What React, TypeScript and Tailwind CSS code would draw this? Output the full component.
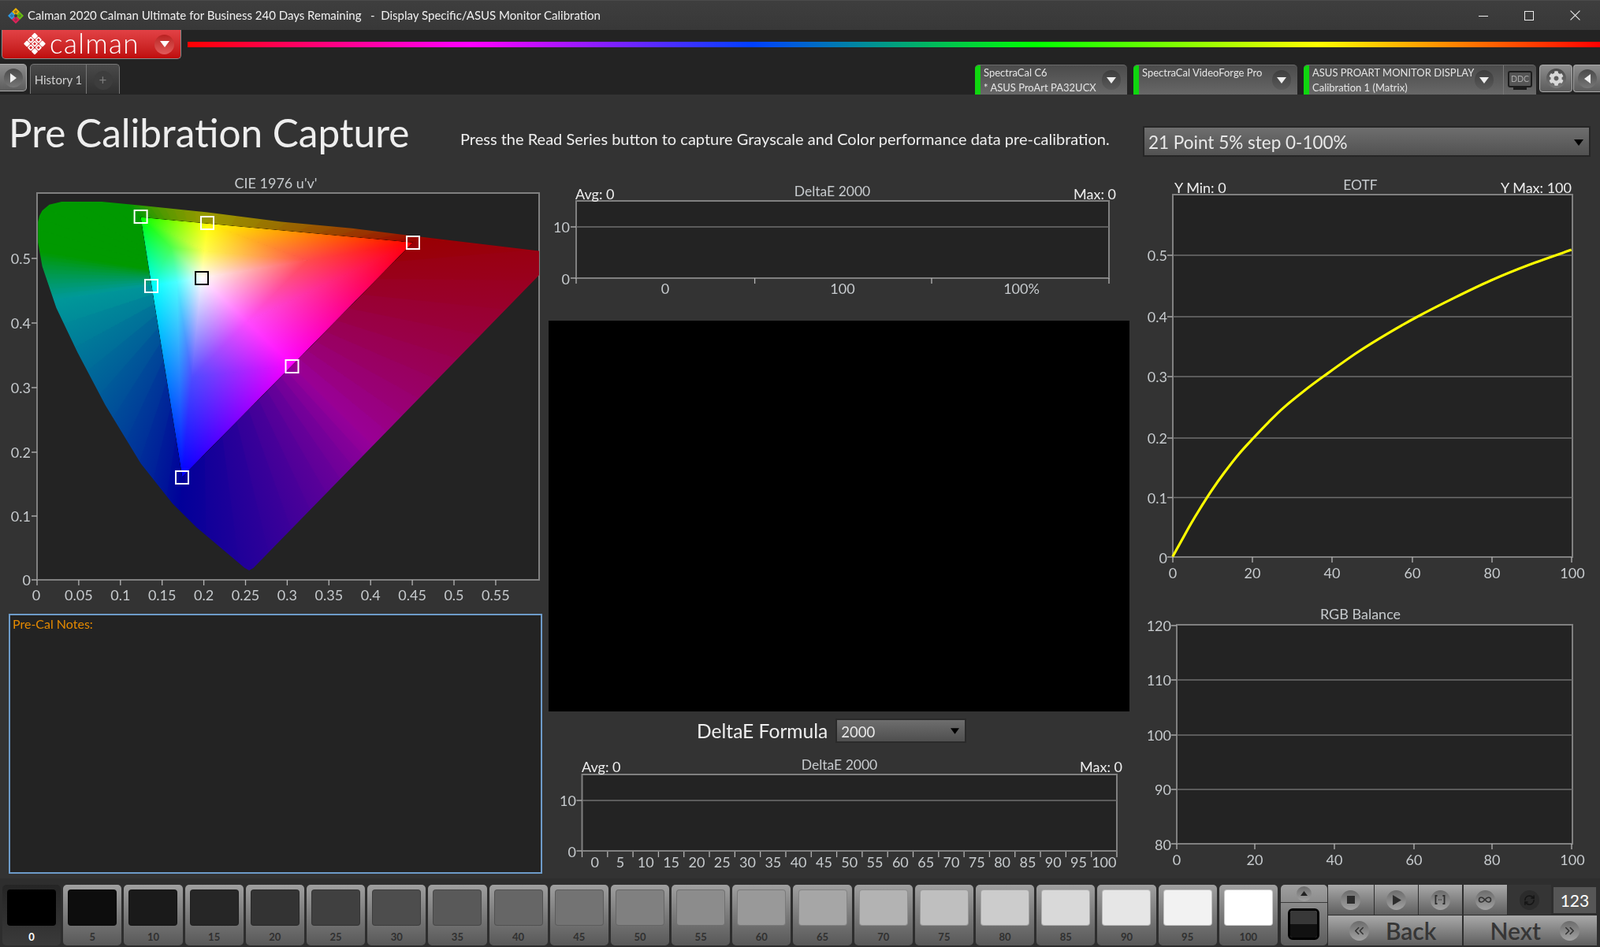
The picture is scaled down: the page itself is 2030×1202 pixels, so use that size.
import React from "react";
import { ChevronsLeft, ChevronsRight, Infinity as InfinityIcon, RefreshCw } from "lucide-react";
import { FaCog } from "react-icons/fa";

type P = [number, number];
type C = [number, number, number];

const z = (x: number, y: number): P => [x / 2.24, 210 + y / 2.657];
const lerpP = (a: P, b: P, t: number): P => [a[0] + (b[0] - a[0]) * t, a[1] + (b[1] - a[1]) * t];
const lerpC = (a: C, b: C, t: number): C => [a[0] + (b[0] - a[0]) * t, a[1] + (b[1] - a[1]) * t, a[2] + (b[2] - a[2]) * t];

let gid = 0;
function Mesh({ a, ca, b, cb, d, cd }: { a: P; ca: C; b: P; cb: C; d: P; cd: C }) {
  const pts = [a, b, d].map((p) => p.join(",")).join(" ");
  const out: React.ReactNode[] = [];
  const channel = ["#ff0000", "#00ff00", "#0000ff"];
  for (let i = 0; i < 3; i++) {
    const fa = ca[i], fb = cb[i], fd = cd[i];
    const key = `m${gid++}`;
    if (Math.abs(fa - fb) < 1e-6 && Math.abs(fb - fd) < 1e-6) {
      const v = Math.round(fa * 255);
      if (v > 0) {
        const col = i === 0 ? `rgb(${v},0,0)` : i === 1 ? `rgb(0,${v},0)` : `rgb(0,0,${v})`;
        out.push(<polygon key={key} points={pts} fill={col} className="mix-blend-plus-lighter" />);
      }
      continue;
    }
    const det = (b[0] - a[0]) * (d[1] - a[1]) - (d[0] - a[0]) * (b[1] - a[1]);
    const ga = ((fb - fa) * (d[1] - a[1]) - (fd - fa) * (b[1] - a[1])) / det;
    const gb = ((fd - fa) * (b[0] - a[0]) - (fb - fa) * (d[0] - a[0])) / det;
    const l = ga * ga + gb * gb;
    const nx = ga / l, ny = gb / l;
    out.push(
      <linearGradient
        key={key + "g"}
        id={key}
        gradientUnits="userSpaceOnUse"
        x1={a[0] - fa * nx}
        y1={a[1] - fa * ny}
        x2={a[0] + (1 - fa) * nx}
        y2={a[1] + (1 - fa) * ny}
      >
        <stop offset="0" stopColor="#000000" />
        <stop offset="1" stopColor={channel[i]} />
      </linearGradient>
    );
    out.push(<polygon key={key} points={pts} fill={`url(#${key})`} className="mix-blend-plus-lighter" />);
  }
  return <>{out}</>;
}

const W = z(573, 380);
const WHITE: C = [1, 1, 1];
const inner: [P, C][] = [
  [z(1173, 260), [1, 0, 0]],
  [z(590, 196), [1, 1, 0]],
  [z(400, 175), [0, 1, 0]],
  [z(431, 405), [0, 1, 1]],
  [z(518, 1050), [0, 0, 1]],
  [z(830, 674), [1, 0, 1]],
];
const k = 0.6;
const outer: [P, C][] = [
  [z(1800, 130), [k, 0, 0]],
  [z(600, 60), [k, k, 0]],
  [z(54, -235), [0, k, 0]],
  [z(-100, 250), [0, k, 0]],
  [z(60, 470), [0, k, k]],
  [z(490, 1400), [0, 0, k]],
  [z(1472, 1423), [k, 0, k]],
];
const locus = [
  [108, 190], [112, 170], [120, 152], [140, 132], [175, 122], [290, 122], [400, 135], [590, 158], [800, 190], [1000, 212], [1190, 240], [1532, 288],
  [1532, 370], [720, 1358], [708, 1366], [695, 1357], [560, 1222], [490, 1140], [400, 1005], [300, 810], [220, 630], [160, 480], [120, 340], [108, 260],
]
  .map(([x, y]) => z(x, y).join(","))
  .join(" ");

function OuterGamut() {
  const parts: React.ReactNode[] = [];
  outer.forEach(([p, c], i) => {
    const [q, e] = outer[(i + 1) % outer.length];
    const n = 10;
    for (let s = 0; s < n; s++) {
      const c0 = lerpC(c, e, s / n), c1 = lerpC(c, e, (s + 1) / n);
      parts.push(<Mesh key={`${i}-${s}`} a={W} ca={lerpC(c0, c1, 0.5)} b={lerpP(p, q, s / n)} cb={c0} d={lerpP(p, q, (s + 1) / n)} cd={c1} />);
    }
  });
  return <g className="isolate">{parts}</g>;
}

function InnerGamut() {
  const wh = 0.3;
  const mid = (p: P): P => lerpP(W, p, 0.5);
  const tint = (c: C): C => lerpC(c, WHITE, wh);
  const parts: React.ReactNode[] = [];
  inner.forEach(([p, c], i) => {
    const [q, e] = inner[(i + 1) % inner.length];
    parts.push(<Mesh key={`a${i}`} a={W} ca={WHITE} b={mid(p)} cb={tint(c)} d={mid(q)} cd={tint(e)} />);
    parts.push(<Mesh key={`b${i}`} a={mid(p)} ca={tint(c)} b={p} cb={c} d={q} cd={e} />);
    parts.push(<Mesh key={`c${i}`} a={mid(p)} ca={tint(c)} b={q} cb={e} d={mid(q)} cd={tint(e)} />);
  });
  return <g className="isolate">{parts}</g>;
}

function T({ x, y, children, anchor = "middle", size = 18, fill = "#c6cacd" }: { x: number; y: number; children: React.ReactNode; anchor?: "start" | "middle" | "end"; size?: number; fill?: string }) {
  return (
    <text x={x} y={y} fontSize={size} textAnchor={anchor} dominantBaseline="central" fill={fill}>
      {children}
    </text>
  );
}

function Plot({ l, t, r, b }: { l: number; t: number; r: number; b: number }) {
  return <rect x={l} y={t} width={r - l} height={b - t} fill="#232323" stroke="#808080" strokeWidth={2} />;
}
const HLine = ({ l, r, y }: { l: number; r: number; y: number }) => <line x1={l} x2={r} y1={y} y2={y} stroke="#6f6f6f" strokeWidth={1.6} />;
const YTick = ({ l, y }: { l: number; y: number }) => <line x1={l - 7} x2={l} y1={y} y2={y} stroke="#a8a8a8" strokeWidth={1.5} />;
const XTick = ({ x, b, len = 7 }: { x: number; b: number; len?: number }) => <line x1={x} x2={x} y1={b} y2={b + len} stroke="#b5b5b5" strokeWidth={1.3} />;

function CieChart() {
  const L = 47, R = 684, Tp = 245, B = 736;
  const us = ["0", "0.05", "0.1", "0.15", "0.2", "0.25", "0.3", "0.35", "0.4", "0.45", "0.5", "0.55"];
  const vs: [string, number][] = [["0.5", 328], ["0.4", 410], ["0.3", 492], ["0.2", 574], ["0.1", 655], ["0", 736]];
  const marks: [number, number, string][] = [
    [178.6, 275, "#fff"], [263, 283, "#fff"], [524, 308, "#fff"], [192, 363, "#fff"], [370.5, 465, "#fff"], [231, 606, "#fff"], [256, 353, "#000"],
  ];
  return (
    <svg viewBox="0 225 696 546" width={696} height={546} className="block">
      <T x={350} y={232}>CIE 1976 u'v'</T>
      <Plot l={L} t={Tp} r={R} b={B} />
      <clipPath id="locus">
        <polygon points={locus} />
      </clipPath>
      <g clipPath="url(#locus)">
        <OuterGamut />
        <InnerGamut />
      </g>
      {marks.map(([x, y, c], i) => (
        <rect key={i} x={x - 8} y={y - 8} width={16} height={16} fill="none" stroke={c} strokeWidth={2} />
      ))}
      {vs.map(([s, y]) => (
        <g key={s}>
          <YTick l={L} y={y} />
          <T x={39} y={y} anchor="end">{s}</T>
        </g>
      ))}
      {us.map((s, i) => (
        <g key={s}>
          <XTick x={L + i * 52.9} b={B} />
          <T x={L + i * 52.9 + (i === 0 ? -1 : 0)} y={755}>{s}</T>
        </g>
      ))}
    </svg>
  );
}

function TopDelta() {
  const L = 731, R = 1407, Tp = 255, B = 353;
  return (
    <svg viewBox="696 225 744 175" width={744} height={175} className="block">
      <Plot l={L} t={Tp} r={R} b={B} />
      <HLine l={L} r={R} y={288} />
      <T x={1056} y={242} size={17.5}>DeltaE 2000</T>
      <T x={730} y={246} anchor="start" fill="#eeeeee">Avg: 0</T>
      <T x={1416} y={246} anchor="end" fill="#eeeeee">Max: 0</T>
      <YTick l={L} y={288} />
      <YTick l={L} y={353} />
      <T x={723} y={288} anchor="end">10</T>
      <T x={723} y={354} anchor="end">0</T>
      {[731, 957.6, 1182, 1407].map((x) => (
        <XTick key={x} x={x} b={B} />
      ))}
      <T x={844} y={366}>0</T>
      <T x={1069} y={366}>100</T>
      <T x={1296} y={366}>100%</T>
    </svg>
  );
}

function BottomDelta() {
  const L = 738.5, R = 1417, Tp = 983, B = 1080;
  const step = (R - L) / 21;
  return (
    <svg viewBox="696 953 744 162" width={744} height={162} className="block">
      <Plot l={L} t={Tp} r={R} b={B} />
      <HLine l={L} r={R} y={1016} />
      <T x={1065} y={970} size={17.5}>DeltaE 2000</T>
      <T x={738} y={973} anchor="start" fill="#eeeeee">Avg: 0</T>
      <T x={1424} y={973} anchor="end" fill="#eeeeee">Max: 0</T>
      <YTick l={L} y={1016} />
      <YTick l={L} y={1080} />
      <T x={731} y={1016} anchor="end">10</T>
      <T x={731} y={1081} anchor="end">0</T>
      {Array.from({ length: 22 }, (_, i) => (
        <XTick key={i} x={L + i * step} b={B + 1} />
      ))}
      {Array.from({ length: 21 }, (_, i) => (
        <T key={i} x={L + (i + 0.5) * step} y={1094}>{i * 5}</T>
      ))}
    </svg>
  );
}

const curve: P[] = [
  [127, 1413], [158, 1352], [188, 1293], [220, 1235], [258, 1170], [300, 1105], [350, 1035], [400, 975], [450, 918], [500, 865], [570, 802], [640, 745],
  [750, 660], [850, 592], [950, 530], [1075, 460], [1200, 395], [1330, 337], [1472, 282],
].map(([x, y]) => [1440 + x / 2.658, 220 + y / 2.904] as P);

function smooth(p: P[]) {
  let d = `M${p[0][0]},${p[0][1]}`;
  for (let i = 0; i < p.length - 1; i++) {
    const a = p[Math.max(0, i - 1)], b = p[i], c = p[i + 1], e = p[Math.min(p.length - 1, i + 2)];
    d += ` C${b[0] + (c[0] - a[0]) / 6},${b[1] + (c[1] - a[1]) / 6} ${c[0] - (e[0] - b[0]) / 6},${c[1] - (e[1] - b[1]) / 6} ${c[0]},${c[1]}`;
  }
  return d;
}

function Eotf() {
  const L = 1488, R = 1995, Tp = 247, B = 707;
  const ys: [string, number][] = [["0.5", 324], ["0.4", 402], ["0.3", 478], ["0.2", 556], ["0.1", 631.5]];
  const xs: [string, number][] = [["0", 1488], ["20", 1589], ["40", 1690], ["60", 1792], ["80", 1893], ["100", 1994]];
  return (
    <svg viewBox="1440 225 590 545" width={590} height={545} className="block">
      <Plot l={L} t={Tp} r={R} b={B} />
      {ys.map(([s, y]) => (
        <g key={s}>
          <HLine l={L} r={R} y={y} />
          <YTick l={L} y={y} />
          <T x={1481} y={y} anchor="end">{s}</T>
        </g>
      ))}
      <YTick l={L} y={B} />
      <T x={1481} y={708} anchor="end">0</T>
      {xs.map(([s, x]) => (
        <g key={s}>
          <XTick x={x} b={B} />
          <T x={x + (s === "100" ? 1 : 0)} y={727}>{s}</T>
        </g>
      ))}
      <T x={1726} y={234} size={17.5}>EOTF</T>
      <T x={1490} y={238} anchor="start" fill="#eeeeee">Y Min: 0</T>
      <T x={1994} y={238} anchor="end" fill="#eeeeee">Y Max: 100</T>
      <path d={smooth(curve)} fill="none" stroke="#ffff00" strokeWidth={3.2} />
    </svg>
  );
}

function RgbBalance() {
  const L = 1493, R = 1995, Tp = 793, B = 1071;
  const ys: [string, number][] = [["120", 794], ["110", 863], ["100", 933], ["90", 1002], ["80", 1072]];
  const xs: [string, number][] = [["0", 1493], ["20", 1592], ["40", 1693], ["60", 1794], ["80", 1893], ["100", 1994]];
  return (
    <svg viewBox="1440 770 590 345" width={590} height={345} className="block">
      <T x={1726} y={779}>RGB Balance</T>
      <Plot l={L} t={Tp} r={R} b={B} />
      {ys.map(([s, y]) => (
        <g key={s}>
          {s !== "120" && s !== "80" && <HLine l={L} r={R} y={y} />}
          <YTick l={L} y={y - (s === "80" ? 1 : 0)} />
          <T x={1486} y={y} anchor="end">{s}</T>
        </g>
      ))}
      {xs.map(([s, x]) => (
        <g key={s}>
          <XTick x={x} b={B} />
          <T x={x + (s === "100" ? 1 : 0)} y={1091}>{s}</T>
        </g>
      ))}
    </svg>
  );
}

function Caret({ className, up }: { className?: string; up?: boolean }) {
  return (
    <svg viewBox="0 0 12 8" className={className}>
      <polygon points={up ? "6,0 12,8 0,8" : "0,0 12,0 6,8"} fill="currentColor" />
    </svg>
  );
}

function DarkCircle() {
  return (
    <div className="w-[24px] h-[25px] rounded-full bg-gradient-to-b from-[#3d3d3d] to-[#5a5a5a] flex items-center justify-center shrink-0">
      <Caret className="w-[12px] h-[8px] text-[#eeeeee]" />
    </div>
  );
}

function Device({ w, l1, l2, children, gap }: { w: string; l1: string; l2?: string; children?: React.ReactNode; gap: string }) {
  return (
    <div className={`${w} h-[38px] mt-[1px] flex rounded-t-[5px] overflow-hidden bg-gradient-to-b from-[#4b4b4b] to-[#686868] border-t border-[#6b6b6b] text-[#e4e4e4] text-[13px] leading-[19px]`}>
      <div className="w-[7px] bg-[#0fd60f] shrink-0" />
      <div className="flex-1 pl-[4px] whitespace-nowrap">
        <div>{l1}</div>
        <div>{l2}</div>
      </div>
      <div className={`flex items-center ${gap}`}>
        <DarkCircle />
      </div>
      {children}
    </div>
  );
}

function AppIcon() {
  return (
    <svg viewBox="0 0 20 20" className="w-[20px] h-[20px] shrink-0">
      <polygon points="10,0 15,5 10,10 5,5" fill="#f2b705" />
      <polygon points="5,5 10,10 5,15 0,10" fill="#2d9be6" />
      <polygon points="15,5 20,10 15,15 10,10" fill="#69bf12" />
      <polygon points="10,10 15,15 10,20 5,15" fill="#e5225b" />
      <polygon points="10,7.5 12.5,10 10,12.5 7.5,10" fill="#3a3a3a" />
      <polygon points="10,2.5 12.5,5 10,7.5 7.5,5" fill="#3a3a3a" opacity="0.55" />
      <polygon points="5,7.5 7.5,10 5,12.5 2.5,10" fill="#3a3a3a" opacity="0.4" />
      <polygon points="15,7.5 17.5,10 15,12.5 12.5,10" fill="#3a3a3a" opacity="0.4" />
      <polygon points="10,12.5 12.5,15 10,17.5 7.5,15" fill="#3a3a3a" opacity="0.4" />
    </svg>
  );
}

function LogoMark() {
  const cells = [0, 1, 2];
  return (
    <svg viewBox="-16 -16 32 32" className="w-[32px] h-[32px] shrink-0">
      <g transform="rotate(45)">
        {cells.map((i) =>
          cells.map((j) => (
            <g key={`${i}${j}`}>
              <rect x={-10.35 + i * 6.9} y={-10.35 + j * 6.9} width={6.2} height={6.2} rx={1.2} fill="#ffffff" />
              {i === 1 || j === 1 ? <rect x={-8.75 + i * 6.9} y={-8.75 + j * 6.9} width={3} height={3} rx={0.8} fill="#d83035" /> : null}
            </g>
          ))
        )}
      </g>
    </svg>
  );
}

function Ball({ children, size = "w-[25px] h-[25px]" }: { children?: React.ReactNode; size?: string }) {
  return <div className={`${size} rounded-full bg-gradient-to-b from-[#6c6c6c] to-[#a2a2a2] flex items-center justify-center text-[#333333] shrink-0`}>{children}</div>;
}

const gloss = "bg-gradient-to-b from-[#aaaaaa] to-[#5f5f5f]";

function Transport({ w, children, dark }: { w: string; children: React.ReactNode; dark?: boolean }) {
  return <div className={`${w} h-full flex items-center justify-center ${dark ? "bg-[#353535]" : gloss}`}>{children}</div>;
}

const levels = Array.from({ length: 21 }, (_, i) => i * 5);

export default function App() {
  return (
    <div className="w-screen h-screen overflow-hidden flex flex-col bg-[#333333] font-[family-name:Lato,sans-serif] text-[#dddddd]">
      {/* title bar */}
      <div className="h-[38px] shrink-0 flex items-center bg-gradient-to-b from-[#3e3e3e] to-[#383838] pl-[10px] border-t border-[#4a4a4a]">
        <AppIcon />
        <div className="ml-[5px] text-[15px] text-[#f0f0f0] font-[family-name:'Open_Sans',sans-serif] whitespace-pre">
          Calman 2020 Calman Ultimate for Business 240 Days Remaining{"   -  "}Display Specific/ASUS Monitor Calibration
        </div>
        <div className="ml-auto flex items-center text-[#eeeeee]">
          <svg viewBox="0 0 12 12" className="w-[12px] h-[12px]"><line x1="0" x2="12" y1="6.5" y2="6.5" stroke="currentColor" /></svg>
          <svg viewBox="0 0 12 12" className="w-[12px] h-[12px] ml-[46px]"><rect x="0.5" y="0.5" width="11" height="11" fill="none" stroke="currentColor" /></svg>
          <svg viewBox="0 0 12 12" className="w-[13px] h-[13px] ml-[46px] mr-[25px]"><path d="M0.5 0.5 L11.5 11.5 M11.5 0.5 L0.5 11.5" stroke="currentColor" /></svg>
        </div>
      </div>

      {/* header strip */}
      <div className="h-[82px] shrink-0 bg-[#232323] flex flex-col">
        <div className="h-[37px] flex items-start shrink-0">
          <div className="ml-[2px] w-[228px] h-[37px] rounded-b-[5px] bg-gradient-to-b from-[#e24145] to-[#bf0a0a] border-x border-b border-[#8a8a8a] flex items-center pl-[25px] shrink-0">
            <LogoMark />
            <span className="ml-[3px] text-[35px] leading-none font-light tracking-[1.4px] text-white -mt-[4px]">calman</span>
            <div className="ml-auto mr-[8px] w-[25px] h-[25px] rounded-full bg-gradient-to-b from-[#b82020] to-[#e25a5a] flex items-center justify-center">
              <Caret className="w-[12px] h-[8px] text-white" />
            </div>
          </div>
          <div className="ml-[8px] mt-[15px] h-[7px] flex-1 bg-[linear-gradient(to_right,#ff0000_0%,#ff00ff_20%,#0040ff_40%,#00ff00_60%,#ffff00_80%,#ff0000_100%)]" />
        </div>
        <div className="flex-1 flex items-start pt-[6px]">
          <div className="w-[34px] h-[35px] rounded-r-[5px] bg-gradient-to-b from-[#8d8d8d] to-[#5c5c5c] border border-l-0 border-[#aaaaaa] flex items-center justify-center shrink-0">
            <div className="w-[24px] h-[24px] rounded-full bg-gradient-to-b from-[#4a4a4a] to-[#777777] flex items-center justify-center">
              <svg viewBox="0 0 8 12" className="w-[8px] h-[12px]"><polygon points="0,0 8,6 0,12" fill="#f0f0f0" /></svg>
            </div>
          </div>
          <div className="ml-[4px] w-[114px] h-[38px] flex rounded-t-[5px] bg-gradient-to-b from-[#4a4a4a] to-[#303030] border border-b-0 border-[#777777] shrink-0">
            <div className="w-[71px] border-r border-[#777777] flex items-center justify-center pt-[1px] text-[15px] text-[#cfcfcf]">History 1</div>
            <div className="flex-1 flex items-center justify-center">
              <div className="w-[24px] h-[24px] rounded-full bg-[#3d3d3d] flex items-center justify-center text-[#7c7c7c] text-[17px] leading-none mt-[2px]">+</div>
            </div>
          </div>
          <div className="ml-auto flex items-start gap-[8px]">
            <Device w="w-[193px]" l1="SpectraCal C6" l2="* ASUS ProArt PA32UCX" gap="mr-[8px]" />
            <Device w="w-[208px]" l1="SpectraCal VideoForge Pro" gap="mr-[8px]" />
            <div className="flex items-start">
              <Device w="w-[295px]" l1="ASUS PROART MONITOR DISPLAY" l2="Calibration 1 (Matrix)" gap="mr-[12px]">
                <div className="w-[42px] border-l border-[#777777] flex items-center justify-center shrink-0">
                  <div className="flex flex-col items-center">
                    <div className="w-[31px] h-[21px] rounded-[3px] bg-[#555555] border-2 border-[#1d1d1d] flex items-center justify-center text-[10.5px] leading-none text-[#a8a8a8]">DDC</div>
                    <div className="w-[17px] h-[3px] bg-[#1d1d1d]" />
                  </div>
                </div>
              </Device>
              <div className="ml-[4px] w-[42px] h-[35px] mt-[1px] rounded-[4px] bg-gradient-to-b from-[#8d8d8d] to-[#5c5c5c] border border-[#aaaaaa] flex items-center justify-center">
                <div className="w-[25px] h-[25px] rounded-full bg-gradient-to-b from-[#4a4a4a] to-[#777777] flex items-center justify-center">
                  <FaCog size={19} color="#d8d8d8" />
                </div>
              </div>
              <div className="ml-[1px] w-[34px] h-[35px] mt-[1px] rounded-l-[4px] bg-gradient-to-b from-[#8d8d8d] to-[#5c5c5c] border border-r-0 border-[#aaaaaa] flex items-center justify-center">
                <div className="w-[24px] h-[24px] rounded-full bg-gradient-to-b from-[#4a4a4a] to-[#777777] flex items-center justify-center">
                  <svg viewBox="0 0 8 12" className="w-[8px] h-[12px]"><polygon points="8,0 0,6 8,12" fill="#f0f0f0" /></svg>
                </div>
              </div>
            </div>
          </div>
        </div>
      </div>

      {/* page header */}
      <div className="h-[105px] shrink-0 flex">
        <h1 className="ml-[11px] mt-[19px] w-[573px] text-[49.5px] leading-[58px] font-normal text-[#eeeeee] whitespace-nowrap shrink-0">Pre Calibration Capture</h1>
        <p className="mt-[43px] w-[866px] text-[20px] leading-[26px] text-[#eeeeee] whitespace-nowrap shrink-0">Press the Read Series button to capture Grayscale and Color performance data pre-calibration.</p>
        <div className="mt-[40px] w-[568px] h-[39px] border-2 border-[#262626] bg-gradient-to-b from-[#6e6e6e] to-[#525252] flex items-center pl-[5px] pr-[7px] pt-[2px] text-[22.5px] text-[#e8e8e8] shrink-0">
          21 Point 5% step 0-100%
          <Caret className="ml-auto w-[12px] h-[8px] text-black" />
        </div>
      </div>

      {/* columns */}
      <div className="flex-1 min-h-0 flex">
        <div className="w-[696px] shrink-0">
          <CieChart />
          <div className="ml-[11px] mt-[8px] w-[677px] h-[330px] border-2 border-[#6d9bc9] bg-[#232323] px-[3px] py-[1px] text-[16px] leading-[20px] text-[#e58a00]">Pre-Cal Notes:</div>
        </div>
        <div className="w-[744px] shrink-0">
          <TopDelta />
          <div className="mt-[7px] w-[737px] h-[496px] bg-black" />
          <div className="h-[50px] flex items-start pl-[188px] pt-[9px]">
            <span className="text-[24.6px] leading-[31px] text-[#eeeeee]">DeltaE Formula</span>
            <div className="ml-[10px] w-[166px] h-[31px] border-2 border-[#2a2a2a] bg-gradient-to-b from-[#6e6e6e] to-[#4f4f4f] flex items-center pl-[5px] pr-[7px] pt-[4px] text-[18.5px] text-[#e8e8e8]">
              2000
              <Caret className="ml-auto w-[11px] h-[8px] text-black -mt-[4px]" />
            </div>
          </div>
          <BottomDelta />
        </div>
        <div className="w-[590px] shrink-0">
          <Eotf />
          <RgbBalance />
        </div>
      </div>

      {/* bottom strip */}
      <div className="h-[87px] shrink-0 bg-[#2e2e2e] pt-[8px] pl-[3px] flex">
        <div className="flex gap-[3px] h-[77px]">
          {levels.map((v, i) => {
            const g = Math.round((v / 100) * 255);
            return (
              <div
                key={v}
                className={`w-[74.2px] rounded-[5px] flex flex-col items-center pt-[6px] ${i === 0 ? "bg-gradient-to-b from-[#252525] to-[#3a3a3a]" : "bg-gradient-to-b from-[#a0a0a0] to-[#585858]"}`}
              >
                <div className="w-[62px] h-[46px] rounded-[4px] border border-[#00000033]" style={{ backgroundColor: `rgb(${g},${g},${g})` }} />
                <div className={`mt-[6px] text-[13px] leading-[16px] font-bold ${i === 0 ? "text-white" : "text-[#303030]"}`}>{v}</div>
              </div>
            );
          })}
        </div>
        <div className="ml-[4px] w-[59px] h-[77px] rounded-[5px] flex flex-col shrink-0 bg-gradient-to-b from-[#a0a0a0] to-[#5c5c5c]">
          <div className="h-[23px] border-b border-[#3a3a3a] flex items-center justify-center">
            <Ball size="w-[19px] h-[19px]"><Caret up className="w-[11px] h-[6px] text-[#222222]" /></Ball>
          </div>
          <div className="flex-1 flex items-center justify-center">
            <div className="w-[40px] h-[40px] rounded-[6px] border-[3px] border-black overflow-hidden flex flex-col">
              <div className="flex-1 bg-[#383838]" />
              <div className="flex-1 bg-[#111111]" />
            </div>
          </div>
        </div>
        <div className="ml-[1px] flex flex-col gap-[1px] h-[77px] w-[344px] shrink-0">
          <div className="h-[38px] flex">
            <Transport w="w-[58px] mr-[1px]"><Ball><div className="w-[10px] h-[10px] bg-[#2c2c2c]" /></Ball></Transport>
            <Transport w="w-[55px] mr-[1px]"><Ball><svg viewBox="0 0 10 12" className="w-[11px] h-[13px] ml-[2px]"><polygon points="0,0 10,6 0,12" fill="#2c2c2c" /></svg></Ball></Transport>
            <Transport w="w-[55px] mr-[2px]">
              <Ball>
                <svg viewBox="0 0 16 14" className="w-[14px] h-[12px]" fill="none" stroke="#2c2c2c" strokeWidth="2">
                  <path d="M4 1 H1.5 V13 H4 M12 1 H14.5 V13 H12" />
                  <path d="M6 7 H7.2 M8.8 7 H10" />
                </svg>
              </Ball>
            </Transport>
            <Transport w="w-[55px] mr-[1px]"><Ball><InfinityIcon size={18} strokeWidth={2.2} color="#333333" /></Ball></Transport>
            <Transport w="w-[55px]" dark><div className="w-[25px] h-[25px] rounded-full bg-[#2b2b2b] flex items-center justify-center"><RefreshCw size={15} strokeWidth={2.4} color="#151515" /></div></Transport>
            <div className="ml-[3px] mt-[3px] w-[54px] h-[33px] bg-[#565656] flex items-center justify-center text-[21px] text-white">123</div>
          </div>
          <div className="h-[38px] flex">
            <div className={`w-[170px] mr-[2px] flex items-center pl-[27px] ${gloss}`}>
              <Ball><ChevronsLeft size={19} strokeWidth={2} color="#333333" /></Ball>
              <span className="ml-[21px] text-[30px] leading-none text-[#363636] font-semibold">Back</span>
            </div>
            <div className={`w-[169px] flex items-center justify-end pr-[22px] ${gloss}`}>
              <span className="mr-[24px] text-[30px] leading-none text-[#363636] font-semibold">Next</span>
              <Ball><ChevronsRight size={19} strokeWidth={2} color="#333333" /></Ball>
            </div>
          </div>
        </div>
      </div>
    </div>
  );
}
